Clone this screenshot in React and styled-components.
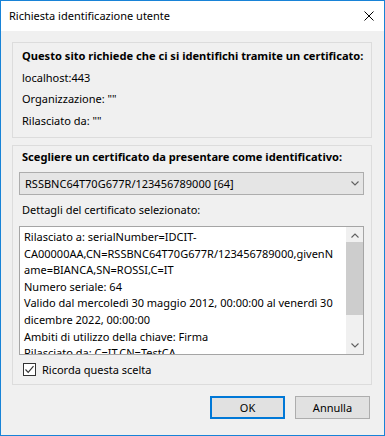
import React from 'react';
import styled, { createGlobalStyle } from 'styled-components';

const FONT = `"Segoe UI", "Noto Sans", "Open Sans", sans-serif`;

const Global = createGlobalStyle`
  html, body { margin: 0; padding: 0; background: #ffffff; }
  body { font-family: ${FONT}; }
`;

const Window = styled.div`
  width: 385px;
  height: 436px;
  box-sizing: border-box;
  border: 1px solid #1883d7;
  background: #f0f0f0;
  display: flex;
  flex-direction: column;
  font-family: ${FONT};
  font-size: 11px;
  color: #000;
`;

const TitleBar = styled.div`
  height: 30px;
  flex: none;
  background: #ffffff;
  display: flex;
  align-items: center;
  justify-content: space-between;
  padding: 0 10px 0 8px;
`;

const Title = styled.span`
  font-size: 11px;
  line-height: 16px;
`;

const Content = styled.div`
  flex: 1;
  display: flex;
  flex-direction: column;
  padding: 11px 12px 0 11px;
`;

const Group = styled.div`
  box-sizing: border-box;
  height: ${p => p.$h}px;
  margin-top: ${p => p.$mt || 0}px;
  border: 1px solid #dcdcdc;
  display: flex;
  flex-direction: column;
  padding: ${p => p.$pad};
`;

const InfoRow = styled.div`
  line-height: 21.5px;
  white-space: nowrap;
  font-weight: ${p => (p.$bold ? 700 : 400)};
  font-size: ${p => (p.$bold ? '11.1px' : '11px')};
`;

const Label = styled.div`
  line-height: 16px;
  margin: ${p => p.$mt}px 0 0 3px;
  white-space: nowrap;
  font-weight: ${p => (p.$bold ? 700 : 400)};
  font-size: ${p => (p.$bold ? '11.1px' : '11px')};
`;

const Select = styled.div`
  box-sizing: border-box;
  height: 23px;
  margin-top: 7px;
  border: 1px solid #adadad;
  background: #e5e5e5;
  display: flex;
  align-items: center;
  justify-content: space-between;
  padding: 0 4px 0 5px;
`;

const TextBox = styled.div`
  box-sizing: border-box;
  height: 129px;
  margin-top: 8px;
  border: 1px solid #a5a5a5;
  background: #ffffff;
  display: flex;
  overflow: hidden;
`;

const TextLines = styled.div`
  flex: 1;
  padding: 2px 0 0 4px;
  line-height: 16.6px;
  overflow: hidden;
`;

const Line = styled.div`
  white-space: nowrap;
`;

const ScrollBar = styled.div`
  width: 17px;
  flex: none;
  background: #f0f0f0;
  display: flex;
  flex-direction: column;
`;

const ScrollArrow = styled.div`
  height: 17px;
  flex: none;
  display: flex;
  align-items: center;
  justify-content: center;
`;

const ScrollTrack = styled.div`
  flex: 1;
  display: flex;
  flex-direction: column;
`;

const Thumb = styled.div`
  height: 73px;
  margin-top: -2px;
  background: #cdcdcd;
`;

const CheckRow = styled.label`
  display: flex;
  align-items: center;
  margin: 8px 0 0 4px;
  height: 13px;
  gap: 6px;
  white-space: nowrap;
`;

const CheckBox = styled.span`
  box-sizing: border-box;
  width: 13px;
  height: 13px;
  border: 1px solid #333333;
  background: #ffffff;
  display: flex;
  align-items: center;
  justify-content: center;
`;

const ButtonRow = styled.div`
  display: flex;
  justify-content: flex-end;
  gap: 10px;
  margin-top: 11px;
  padding-right: 2px;
`;

const Button = styled.button`
  box-sizing: border-box;
  width: 75px;
  height: 23px;
  padding: 0;
  background: #e1e1e1;
  border: ${p => (p.$default ? '2px solid #0078d7' : '1px solid #adadad')};
  font-family: ${FONT};
  font-size: 11px;
  color: #000;
  display: flex;
  align-items: center;
  justify-content: center;
`;

const Chevron = ({ up, w = 8, h = 5, color = '#606060' }) => (
  <svg width={w} height={h} viewBox="0 0 8 5">
    <path
      d={up ? 'M0.5 4.5 L4 1 L7.5 4.5' : 'M0.5 0.5 L4 4 L7.5 0.5'}
      fill="none"
      stroke={color}
      strokeWidth="1.1"
    />
  </svg>
);

const CloseIcon = () => (
  <svg width="10" height="10" viewBox="0 0 10 10">
    <path d="M0.5 0.5 L9.5 9.5 M9.5 0.5 L0.5 9.5" stroke="#000" strokeWidth="1" />
  </svg>
);

const CheckMark = () => (
  <svg width="11" height="11" viewBox="0 0 11 11">
    <path d="M1.5 5.5 L4.2 8.3 L9.5 2.2" fill="none" stroke="#333" strokeWidth="1.2" />
  </svg>
);

const details = [
  'Rilasciato a: serialNumber=IDCIT-',
  'CA00000AA,CN=RSSBNC64T70G677R/123456789000,givenN',
  'ame=BIANCA,SN=ROSSI,C=IT',
  'Numero seriale: 64',
  'Valido dal mercoledì 30 maggio 2012, 00:00:00 al venerdì 30',
  'dicembre 2022, 00:00:00',
  'Ambiti di utilizzo della chiave: Firma',
  'Rilasciato da: C=IT,CN=TestCA',
];

export default function App() {
  return (
    <>
      <Global />
      <Window>
        <TitleBar>
          <Title>Richiesta identificazione utente</Title>
          <CloseIcon />
        </TitleBar>
        <Content>
          <Group $h={96} $pad="2px 9px 0">
            <InfoRow $bold>Questo sito richiede che ci si identifichi tramite un certificato:</InfoRow>
            <InfoRow>localhost:443</InfoRow>
            <InfoRow>Organizzazione: ""</InfoRow>
            <InfoRow>Rilasciato da: ""</InfoRow>
          </Group>
          <Group $h={240} $mt={7} $pad="0 7px 0 6px">
            <Label $bold $mt={3}>Scegliere un certificato da presentare come identificativo:</Label>
            <Select>
              <span>RSSBNC64T70G677R/123456789000 [64]</span>
              <Chevron />
            </Select>
            <Label $mt={7}>Dettagli del certificato selezionato:</Label>
            <TextBox>
              <TextLines>
                {details.map((l, i) => (
                  <Line key={i}>{l}</Line>
                ))}
              </TextLines>
              <ScrollBar>
                <ScrollArrow>
                  <Chevron up />
                </ScrollArrow>
                <ScrollTrack>
                  <Thumb />
                </ScrollTrack>
                <ScrollArrow>
                  <Chevron />
                </ScrollArrow>
              </ScrollBar>
            </TextBox>
            <CheckRow>
              <CheckBox>
                <CheckMark />
              </CheckBox>
              <span>Ricorda questa scelta</span>
            </CheckRow>
          </Group>
          <ButtonRow>
            <Button $default>OK</Button>
            <Button>Annulla</Button>
          </ButtonRow>
        </Content>
      </Window>
    </>
  );
}
